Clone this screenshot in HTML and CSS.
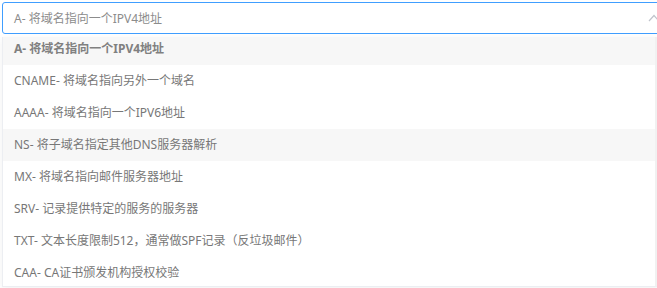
FILE: index.html
```html
<!DOCTYPE html>
<html lang="zh-CN">
<head>
  <meta charset="UTF-8" />
  <meta name="viewport" content="width=device-width, initial-scale=1.0"/>
  <title>记录类型</title>
  <link rel="stylesheet" href="styles.css">
</head>
<body>
  <div class="select">
    <div class="select-input">
      <span class="select-value">A- 将域名指向一个IPV4地址</span>
      <svg class="select-arrow" width="12" height="8" viewBox="0 0 12 8">
        <path d="M1 7 L6 1.5 L11 7" fill="none" stroke="#c0c4cc" stroke-width="1.2"/>
      </svg>
    </div>

    <div class="dropdown">
      <ul class="option-list">
        <li class="option selected">A- 将域名指向一个IPV4地址</li>
        <li class="option">CNAME- 将域名指向另外一个域名</li>
        <li class="option">AAAA- 将域名指向一个IPV6地址</li>
        <li class="option hover">NS- 将子域名指定其他DNS服务器解析</li>
        <li class="option">MX- 将域名指向邮件服务器地址</li>
        <li class="option">SRV- 记录提供特定的服务的服务器</li>
        <li class="option">TXT- 文本长度限制512，通常做SPF记录（反垃圾邮件）</li>
        <li class="option">CAA- CA证书颁发机构授权校验</li>
      </ul>
      <div class="scroll-track"></div>
    </div>
  </div>
</body>
</html>
```

FILE: styles.css
```css
* {
  box-sizing: border-box;
  font-family: 'Noto Sans', 'Noto Sans CJK SC', sans-serif;
}

body {
  margin: 0;
  padding: 0;
  background: #fff;
  overflow: hidden;
}

.select {
  position: relative;
  padding: 2px 0 0 2px;
  width: 100%;
  height: 288px;
  overflow: hidden;
}

.select-input {
  display: flex;
  align-items: center;
  width: 670px;
  height: 32px;
  padding: 0 11px;
  border: 1px solid #409eff;
  border-radius: 3px;
  font-size: 12px;
  color: #8c8c8c;
  background: #fff;
}

.select-arrow {
  margin-left: auto;
  margin-top: -1px;
}

.dropdown {
  position: absolute;
  top: 37px;
  left: 2px;
  width: 659px;
  height: 250px;
  display: flex;
  background: #fff;
  border-left: 1px solid #eceef2;
  border-bottom: 1px solid #eceef2;
  box-shadow: 0 2px 8px rgba(0, 0, 0, 0.06);
  overflow: hidden;
}

.option-list {
  flex: 1;
  list-style: none;
  margin: -4px 0 0 0;
  padding: 0;
}

.option {
  height: 32px;
  line-height: 32px;
  padding-left: 11px;
  font-size: 12px;
  color: #777;
  white-space: nowrap;
}

.option.selected {
  font-weight: bold;
  color: #808080;
  background: #f7f7f7;
}

.option.hover {
  background: #f7f7f7;
}

.scroll-track {
  width: 6px;
  background: #f1f1f1;
}
```
